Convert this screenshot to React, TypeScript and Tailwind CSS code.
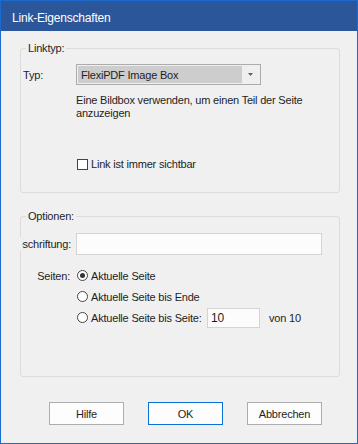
import React from 'react'

const font = { fontFamily: '"Liberation Sans", Arial, sans-serif' }

function Radio({ checked }: { checked?: boolean }) {
  return (
    <span className="flex h-[11px] w-[11px] shrink-0 items-center justify-center rounded-full border border-[#444] bg-white">
      {checked && <span className="h-[5px] w-[5px] rounded-full bg-[#333]" />}
    </span>
  )
}

function Button({ label, primary }: { label: string; primary?: boolean }) {
  return (
    <button
      className={`flex h-[23px] w-[75px] items-center justify-center bg-[#fdfdfd] text-[#1e1e1e] border ${
        primary ? 'border-[#0a6fd6]' : 'border-[#adadad]'
      }`}
    >
      {label}
    </button>
  )
}

export default function App() {
  return (
    <div
      className="flex h-[444px] w-[358px] flex-col border border-[#1b6ad0] bg-[#f0f0f0] text-[11px] leading-[14px] tracking-[-0.2px] text-[#1e1e1e]"
      style={font}
    >
      {/* Titelleiste */}
      <div className="h-[30px] shrink-0 bg-[#2b579a] pl-[11px] pt-[10px] text-[12px] text-white">
        Link-Eigenschaften
      </div>

      <div className="flex flex-col pl-[19px] pt-[10px]">
        {/* Linktyp */}
        <fieldset className="w-[320px] rounded-[3px] border border-[#dcdcdc] pb-[21px]">
          <legend className="ml-[5px] px-[2px]">Linktyp:</legend>
          <div className="mt-[9px] flex items-center pl-[2px]">
            <span className="w-[53px]">Typ:</span>
            <div className="flex h-[21px] w-[185px] border border-[#acacac] bg-[#efefef] p-[1px]">
              <div className="flex w-[164px] items-center bg-[#cdcdcd] pl-[3px]">FlexiPDF Image Box</div>
              <div className="flex flex-1 items-center justify-center">
                <svg width="5" height="3" viewBox="0 0 5 3">
                  <path d="M0 0h5L2.5 3z" fill="#606060" />
                </svg>
              </div>
            </div>
          </div>
          <p className="ml-[55px] mt-[9px] w-[240px] leading-[13px]">
            Eine Bildbox verwenden, um einen Teil der Seite anzuzeigen
          </p>
          <label className="ml-[56px] mt-[37px] flex h-[14px] items-center gap-[3px]">
            <span className="h-[11px] w-[11px] border border-[#444] bg-white" />
            Link ist immer sichtbar
          </label>
        </fieldset>

        {/* Optionen */}
        <fieldset className="mt-[16px] w-[320px] rounded-[3px] border border-[#dcdcdc] pb-[48px]">
          <legend className="ml-[5px] px-[2px]">Optionen:</legend>
          <div className="mt-[10px] flex items-center">
            <div className="-ml-[1px] flex w-[52px] bg-[#f0f0f0] pl-[2px] pr-[1px]">
              <div className="flex flex-1 justify-end overflow-hidden whitespace-nowrap">Beschriftung:</div>
            </div>
            <div className="ml-[4px] h-[22px] w-[246px] border border-[#d4d4d4] bg-[#fcfcfc]" />
          </div>
          <div className="mt-[10px] flex flex-col">
            <div className="flex h-[21px] items-center">
              <span className="w-[50px] pr-[1px] text-right">Seiten:</span>
              <span className="ml-[6px] flex items-center gap-[3px]">
                <Radio checked />
                Aktuelle Seite
              </span>
            </div>
            <div className="flex h-[21px] items-center pl-[56px]">
              <span className="flex items-center gap-[3px]">
                <Radio />
                Aktuelle Seite bis Ende
              </span>
            </div>
            <div className="flex h-[21px] items-center pl-[56px]">
              <span className="flex w-[130px] items-center gap-[3px] whitespace-nowrap">
                <Radio />
                Aktuelle Seite bis Seite:
              </span>
              <div className="flex h-[20px] w-[53px] items-center border border-[#d4d4d4] bg-[#fcfcfc] pl-[3px] text-[12px]">10</div>
              <span className="ml-[9px]">von 10</span>
            </div>
          </div>
        </fieldset>

        {/* Schaltflächen */}
        <div className="mt-[25px] flex gap-[24px] pl-[29px]">
          <Button label="Hilfe" />
          <Button label="OK" primary />
          <Button label="Abbrechen" />
        </div>
      </div>
    </div>
  )
}
